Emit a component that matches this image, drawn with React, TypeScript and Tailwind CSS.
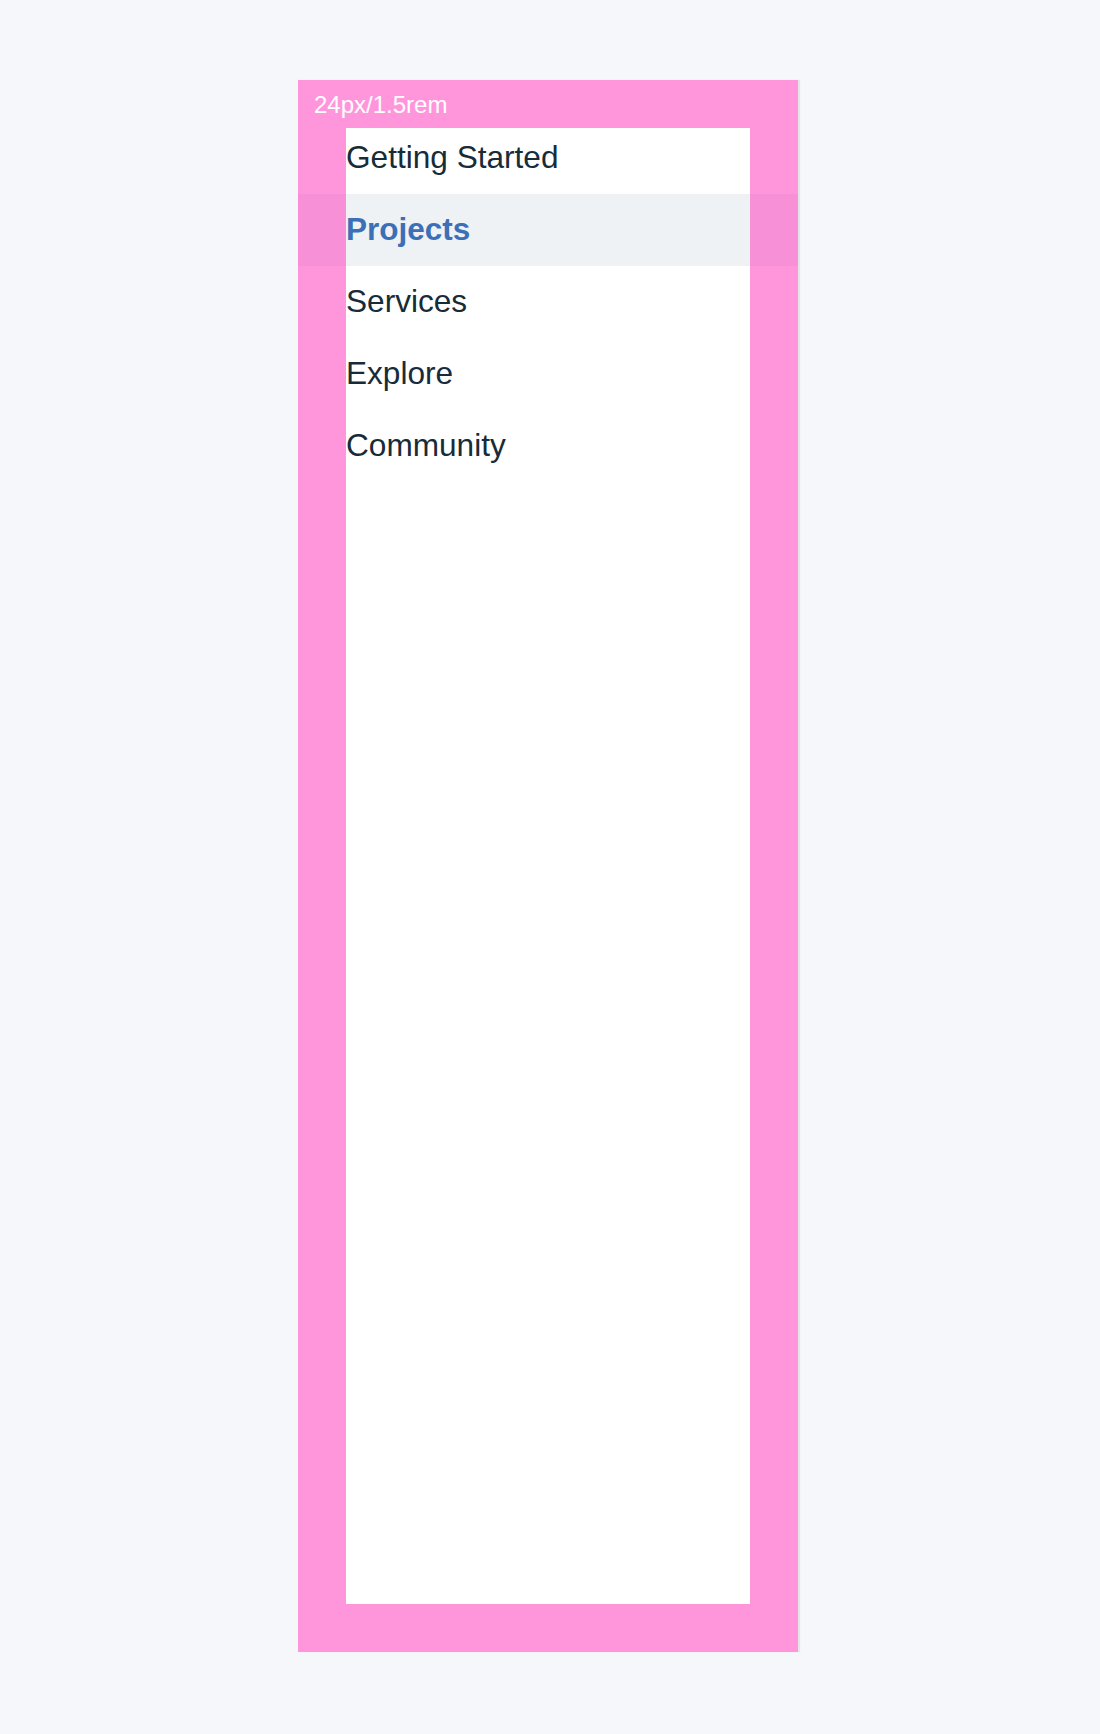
import React from 'react';

const links = [
  { label: 'Getting Started' },
  { label: 'Projects', active: true },
  { label: 'Services' },
  { label: 'Explore' },
  { label: 'Community' },
];

export default function App() {
  return (
    <div className="min-h-[1734px] bg-[#f5f7fa] pt-20 pl-[298px]" style={{ fontFamily: '"Liberation Sans", Arial, sans-serif' }}>
      <nav className="relative w-[500px] h-[1572px] bg-white p-12 shadow-[2px_0_1px_rgba(0,0,0,0.07)]">
        <ul className="-mt-1.5">
          {links.map((link) => (
            <li
              key={link.label}
              className={
                link.active
                  ? '-mx-12 px-12 h-[72px] leading-[70px] text-[31.5px] font-bold text-[#3c6fb6] bg-[#eef2f5]'
                  : 'h-[72px] leading-[70px] text-[31.6px] text-[#182b38]'
              }
            >
              {link.label}
            </li>
          ))}
        </ul>

        {/* padding overlay */}
        <div className="absolute inset-0 border-[48px] border-[rgba(255,45,185,0.5)] pointer-events-none" />
        <span className="absolute top-[13px] left-4 text-[24px] leading-none text-white">24px/1.5rem</span>
      </nav>
    </div>
  );
}
